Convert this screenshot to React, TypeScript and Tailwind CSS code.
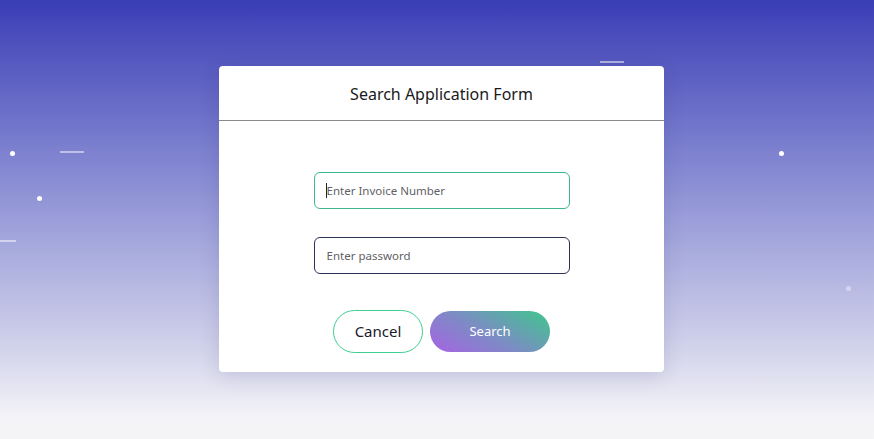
import React from "react";

export default function App() {
  return (
    <div
      className="relative w-[874px] h-[439px] overflow-hidden bg-[linear-gradient(180deg,#393db6_0%,#5659bf_14%,#7a7ece_33%,#a4a7dc_55%,#cfd0ea_78%,#f3f3f7_95%,#f5f5f7_100%)]"
      style={{ fontFamily: '"Noto Sans", "Open Sans", sans-serif' }}
    >
      {/* decorations */}
      <div className="absolute left-[10px] top-[151px] w-[5px] h-[5px] rounded-full bg-white" />
      <div className="absolute left-[37px] top-[196px] w-[5px] h-[5px] rounded-full bg-white" />
      <div className="absolute left-[779px] top-[151px] w-[5px] h-[5px] rounded-full bg-white" />
      <div className="absolute left-[846px] top-[286px] w-[5px] h-[5px] rounded-full bg-white/40" />
      <div className="absolute left-[60px] top-[151px] w-[24px] h-[2px] bg-white/50" />
      <div className="absolute left-0 top-[240px] w-[16px] h-[2px] bg-white/50" />
      <div className="absolute left-[600px] top-[61px] w-[24px] h-[2px] bg-white/50" />

      <div className="flex pt-[66px] pl-[219px]">
        <div className="w-[445px] h-[306px] bg-white rounded-[4px] shadow-[0_4px_20px_rgba(40,40,100,0.15)] flex flex-col">
          <div className="h-[55px] flex items-center justify-center border-b border-[#8a8a8a]">
            <span className="text-[16px] text-[#1a1a1a] mt-[2px]">Search Application Form</span>
          </div>
          <div className="flex flex-col items-center pt-[51px]">
            <div className="w-[256px] h-[37px] rounded-[6px] border border-[#3cb88a] flex items-center pl-[11px]">
              <div className="w-[1px] h-[15px] bg-[#222]" />
              <span className="text-[11.5px] text-[#5f5f66] mt-[1px]">Enter Invoice Number</span>
            </div>
            <div className="w-[256px] h-[37px] mt-[28px] rounded-[6px] border border-[#2b3252] flex items-center pl-[12px]">
              <span className="text-[11.5px] text-[#5f5f66] mt-[1px]">Enter password</span>
            </div>
            <div className="flex items-center gap-[7px] mt-[36px]">
              <div className="w-[90px] h-[43px] rounded-full border border-[#3ecf8e] flex items-center justify-center text-[15px] text-[#1a1a2e]">
                Cancel
              </div>
              <div className="w-[120px] h-[41px] rounded-full bg-[linear-gradient(30deg,#a663e2_0%,#7e8ac6_45%,#3ec78c_100%)] flex items-center justify-center text-[13px] text-white">
                Search
              </div>
            </div>
          </div>
        </div>
      </div>
    </div>
  );
}
